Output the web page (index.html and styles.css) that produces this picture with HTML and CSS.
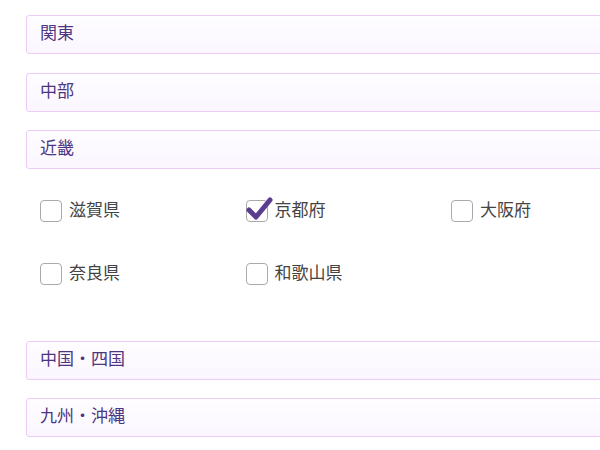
FILE: index.html
```html
<!DOCTYPE html>
<html lang="ja">
<head>
<meta charset="utf-8">
<link rel="stylesheet" href="styles.css">
</head>
<body>
<div class="page">
  <div class="region">関東</div>
  <div class="region">中部</div>
  <div class="region">近畿</div>
  <div class="prefs">
    <label class="pref"><span class="box"></span><span>滋賀県</span></label>
    <label class="pref"><span class="box checked"><svg class="tick" width="30" height="26" viewBox="0 0 30 26"><path d="M3 13 L10 20 L24 3" fill="none" stroke="#5b3d8f" stroke-width="5" stroke-linecap="round" stroke-linejoin="round"/></svg></span><span>京都府</span></label>
    <label class="pref"><span class="box"></span><span>大阪府</span></label>
    <label class="pref"><span class="box"></span><span>奈良県</span></label>
    <label class="pref"><span class="box"></span><span>和歌山県</span></label>
  </div>
  <div class="region">中国・四国</div>
  <div class="region">九州・沖縄</div>
</div>
</body>
</html>
```
FILE: styles.css
```css
html, body {
  margin: 0;
  padding: 0;
  overflow: hidden;
  background: #fff;
}
.page {
  padding: 15px 0 0 26px;
  font-family: "Noto Sans CJK JP", "Noto Sans", sans-serif;
  width: 600px;
  box-sizing: border-box;
  overflow: visible;
}
.region {
  box-sizing: border-box;
  width: 640px;
  height: 39px;
  margin-bottom: 18.5px;
  border: 1px solid #eccbf7;
  border-radius: 3px;
  background: linear-gradient(#fefdff, #fbf6ff);
  color: #4d3580;
  font-size: 17px;
  line-height: 31px;
  padding-left: 13px;
  padding-bottom: 4px;
}
.prefs {
  display: grid;
  grid-template-columns: 205.5px 205.5px 205.5px;
  padding: 12px 0 0 14px;
  height: 153px;
  box-sizing: border-box;
  row-gap: 41px;
  align-content: start;
}
.pref {
  display: flex;
  align-items: center;
  gap: 7px;
  color: #444;
  font-size: 17px;
  height: 22px;
  line-height: 18px;
}
.pref > span:last-child {
  padding-bottom: 3px;
}
.box {
  position: relative;
  box-sizing: border-box;
  width: 22px;
  height: 22px;
  border: 1px solid #aaa;
  border-radius: 4px;
  background: #fff;
  flex: none;
}
.tick {
  position: absolute;
  left: -1px;
  top: -4px;
}
```
